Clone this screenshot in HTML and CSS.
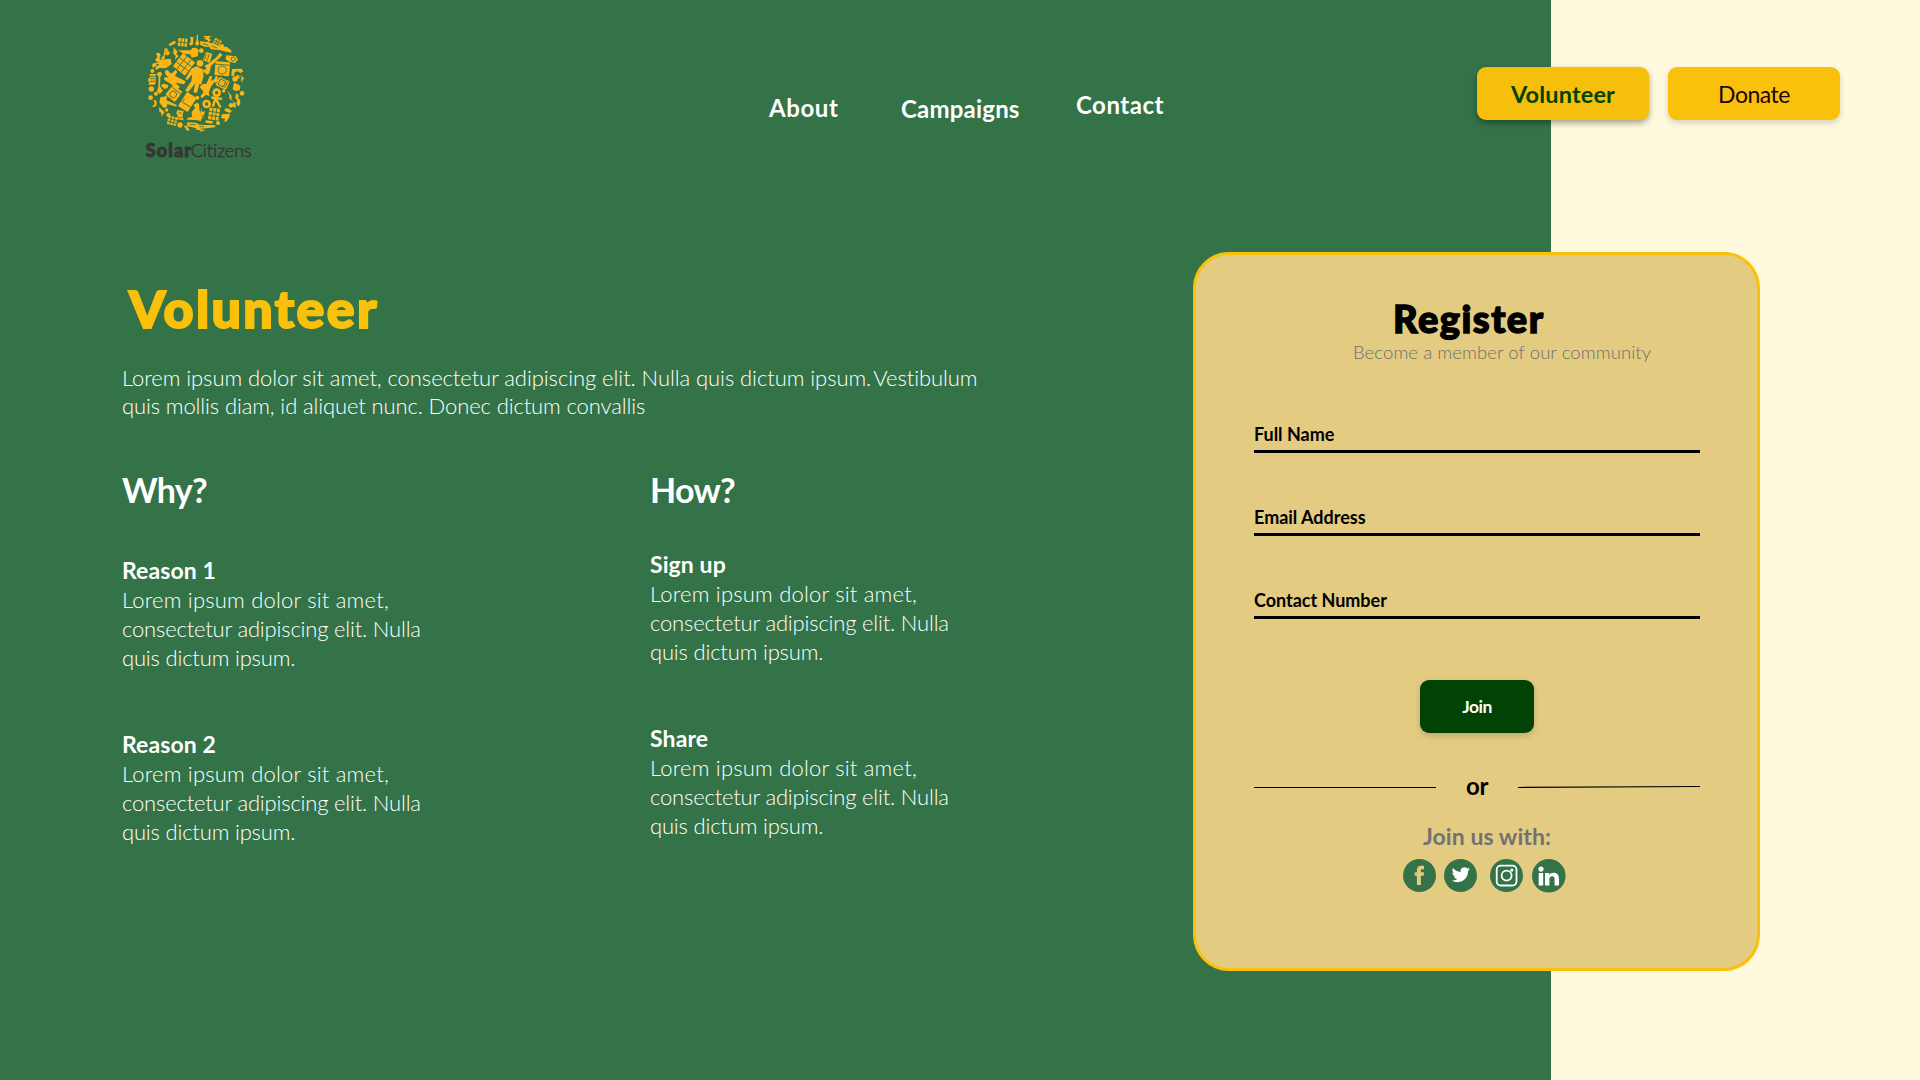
FILE: index.html
```html
<!DOCTYPE html>
<html lang="en">
<head>
<meta charset="utf-8">
<title>Solar Citizens – Volunteer</title>
<link rel="stylesheet" href="styles.css">
</head>
<body>
<header class="header">
  <a class="logo">
    <svg class="logo-svg" viewBox="0 0 420 450" role="img" aria-label="Solar Citizens">
      <g class="logo-art">
        <!-- solar panels -->
        <g transform="translate(162 133) rotate(38)">
          <rect x="-23" y="-25" width="46" height="50" rx="2"/>
          <path class="cut" d="M-8-25V25M8-25V25M-23-8H23M-23 8H23"/>
        </g>
        <g transform="translate(252 282) rotate(8)">
          <rect x="-16" y="-18" width="32" height="36" rx="2"/>
          <path class="cut" d="M-5-18V18M6-18V18M-16-6H16M-16 6H16"/>
        </g>
        <g transform="translate(127 302) rotate(14)">
          <rect x="-14" y="-13" width="28" height="26" rx="2"/>
          <path class="cut" d="M-5-13V13M5-13V13M-14-4H14M-14 5H14"/>
        </g>
        <g transform="translate(158 67) rotate(6)">
          <rect x="-14" y="-12" width="28" height="24" rx="2"/>
          <path class="cut" d="M-5-12V12M5-12V12M-14 0H14"/>
        </g>
        <g transform="translate(261 68) rotate(28)">
          <rect x="-11" y="-11" width="22" height="22" rx="2"/>
          <path class="cut" d="M-3-11V11M4-11V11M-11-3H11M-11 4H11"/>
        </g>
        <!-- standing figure -->
        <circle cx="210" cy="130" r="10"/>
        <path d="M199 139L184 146L166 176L171 181L187 163L184 184L165 212L175 216L196 190L190 217L201 219L210 184L216 165L207 190L213 195L221 168L218 148Z"/>
        <!-- second figure -->
        <path d="M105 152L113 150L123 161L137 150L142 155L135 168L167 184L162 193L136 188L150 201L143 207L124 193L102 179L104 171L116 173L106 163Z"/>
        <path d="M218 192L229 191L240 167L246 169L243 184L254 176L257 181L242 202L236 219L239 229L228 224L216 235L211 229L221 216L209 201Z"/>
        <!-- washing machines -->
        <g transform="translate(277 146) rotate(5)">
          <rect x="-22" y="-21" width="44" height="42" rx="3"/>
          <path class="cut" d="M-22-12H22"/><circle class="cut" cy="4" r="12"/>
        </g>
        <g transform="translate(132 220) rotate(38)">
          <rect x="-18" y="-19" width="36" height="38" rx="3"/>
          <path class="cut" d="M-18-11H18"/><circle class="cut" cy="4" r="10"/>
        </g>
        <g transform="translate(278 190) rotate(25)">
          <rect x="-17" y="-14" width="34" height="28" rx="3"/>
          <rect class="cut" x="-11" y="-9" width="17" height="18"/><path class="cut" d="M11-10V10"/>
        </g>
        <!-- fridge -->
        <g transform="translate(172 246) rotate(33)">
          <rect x="-17" y="-25" width="34" height="50" rx="3"/>
          <path class="cut" d="M-17 8H17M-12-3V4"/>
        </g>
        <!-- dog -->
        <path d="M201 248L207 251L208 269L216 290L213 303L197 300L170 299L173 293L186 291L185 276L196 263L190 255Z"/>
        <!-- bicycle and wheels -->
        <path fill-rule="evenodd" d="M260 205a13 13 0 1 1 0 26a13 13 0 1 1 0-26M260 213a5 5 0 1 0 0 10a5 5 0 1 0 0-10M230 239a13 13 0 1 1 0 26a13 13 0 1 1 0-26M230 247a5 5 0 1 0 0 10a5 5 0 1 0 0-10"/>
        <path d="M244 229L276 233L277 239L263 239L275 262L268 263L257 244L252 261L245 259L252 238L244 236Z"/>
        <!-- watering cans and tools -->
        <path d="M145 91L183 91L186 84L199 83L206 91L203 109L185 113L180 103L160 101Z"/>
        <path d="M94 119L122 116L125 132L107 145L89 144L78 150L76 143L88 132L79 131Z"/>
        <path d="M210 64L236 67L271 79L288 80L304 91L304 98L283 94L267 90L243 88L238 80L225 80L211 75Z"/>
        <path class="cut" d="M218 71L235 75M244 78L262 84"/>
        <path d="M91 232L112 228L109 240L140 255L139 260L112 252L110 262L100 263L88 247Z"/>
        <path d="M172 307L199 308L207 314L256 316L256 322L207 327L188 322L171 319Z"/>
        <path class="cut" d="M178 314H197M208 320H222"/>
        <path d="M86 157L93 155L96 163L91 172L90 199L99 212L89 222L81 215L85 200L86 170L79 162Z"/>
        <path d="M59 162H77V190L73 194H56L58 185H54L56 173H60Z"/>
        <path class="cut" d="M60 169H77M60 176H76M59 184H76"/>
        <path d="M270 98L278 105L243 138L238 160L230 165L224 157L229 145L223 137L234 132L259 112Z"/>
        <path d="M228 96L247 101L239 128L219 121Z"/>
        <path class="cut" d="M230 101L224 119M238 102L231 123"/>
        <path d="M289 106L318 109L324 119L315 129L298 125L286 117Z"/>
        <circle class="cut" cx="310" cy="117" r="6"/>
        <path d="M306 147L335 146L340 155L330 159L325 154L314 156L312 169L304 167Z"/>
        <path d="M312 188L326 194L331 199L329 211L315 213L308 207Z"/>
        <path d="M276 283L300 281L297 293L289 305L283 305L285 296L273 294Z"/>
        <path d="M142 270L161 273L157 289L161 301L136 297L144 289L139 280Z"/>
        <path class="cut" d="M146 278L155 280M143 293H155"/>
        <!-- bolts -->
        <path d="M131 82L143 95L139 101L146 109L135 119L137 107L130 102Z"/>
        <path d="M218 47L245 49L236 55L244 60L232 68L234 61L222 56L228 53Z"/>
        <path d="M87 261L96 269L104 276L95 290L94 279L88 275Z"/>
        <path d="M213 265L216 276L226 273L216 299L218 285L211 286Z"/>
        <path d="M292 211L305 228L304 236L310 245L297 235L299 229Z"/>
        <path d="M331 164L344 177L337 179L338 190L332 179L335 175Z"/>
        <path d="M197 321L217 329L229 329L209 336L213 331L199 329Z"/>
        <path d="M162 319L168 316L179 330L172 333Z"/>
        <!-- bulbs, notes, small pieces -->
        <path d="M104 84L114 87L112 94L105 92L104 116L95 120L94 111L100 109Z"/>
        <path d="M181 50L190 51L189 73L181 77L177 70L182 66Z"/>
        <path d="M200 44L204 44L204 60L208 71L201 78L195 71L200 60Z"/>
        <path d="M116 73L132 62L139 67L132 73L119 78Z"/>
        <path d="M78 99H88L92 106L88 115L94 121L83 127L75 120L82 111Z"/>
        <path d="M67 131L83 127L78 139L67 143Z"/>
        <path d="M71 240L78 241L81 252L75 261L66 260L74 252Z"/>
        <path d="M92 196L101 191L115 195L113 204L103 207Z"/>
        <path d="M318 220L326 225L325 235L331 241L328 258L321 257L323 243L316 233Z"/>
        <path d="M310 245L317 250L317 263L309 261Z"/>
        <path d="M286 265L297 266L306 274L299 279L283 272Z"/>
        <path d="M227 301L249 304L247 311L226 308Z"/>
        <path d="M255 170L262 167L264 183L255 190Z"/>
        <circle cx="64" cy="207" r="8"/><circle cx="78" cy="221" r="6"/><circle cx="62" cy="233" r="7"/>
        <circle cx="67" cy="153" r="6"/><circle cx="112" cy="99" r="7"/><circle cx="214" cy="92" r="7"/>
        <circle cx="276" cy="78" r="6"/><circle cx="290" cy="86" r="5"/><circle cx="315" cy="177" r="8"/>
        <circle cx="323" cy="171" r="6"/><circle cx="336" cy="220" r="7"/><circle cx="303" cy="256" r="7"/>
        <circle cx="150" cy="315" r="8"/><circle cx="264" cy="309" r="6"/><circle cx="115" cy="285" r="6"/>
        <circle cx="110" cy="270" r="5"/><circle cx="224" cy="153" r="5"/><circle cx="202" cy="233" r="6"/>
        <circle cx="281" cy="213" r="5"/><circle cx="200" cy="204" r="4"/><circle cx="325" cy="248" r="6"/>
      </g>
      <text class="logo-name" x="47" y="412"><tspan class="logo-bold" textLength="136">Solar</tspan><tspan x="182" textLength="183">Citizens</tspan></text>
    </svg>
  </a>
  <nav class="nav">
    <a class="nav-about">About</a>
    <a class="nav-campaigns">Campaigns</a>
    <a class="nav-contact">Contact</a>
  </nav>
  <div class="actions">
    <a class="btn btn-volunteer">Volunteer</a>
    <a class="btn btn-donate">Donate</a>
  </div>
</header>

<main class="main">
  <section class="content">
    <h1 class="title">Volunteer</h1>
    <p class="intro">Lorem ipsum dolor sit amet, consectetur adipiscing elit. Nulla quis dictum ipsum.<span class="tight"> </span>Vestibulum<br><span class="snug">quis mollis diam, id aliquet nunc. Donec dictum convallis</span></p>
    <div class="columns">
      <div class="column">
        <h2 class="heading">Why?</h2>
        <article class="item">
          <h3 class="item-title">Reason 1</h3>
          <p><span class="wide">Lorem ipsum dolor sit amet,</span><br>consectetur adipiscing elit. Nulla<br>quis dictum ipsum.</p>
        </article>
        <article class="item">
          <h3 class="item-title">Reason 2</h3>
          <p><span class="wide">Lorem ipsum dolor sit amet,</span><br>consectetur adipiscing elit. Nulla<br>quis dictum ipsum.</p>
        </article>
      </div>
      <div class="column column-how">
        <h2 class="heading">How?</h2>
        <article class="item">
          <h3 class="item-title">Sign up</h3>
          <p><span class="wide">Lorem ipsum dolor sit amet,</span><br>consectetur adipiscing elit. Nulla<br>quis dictum ipsum.</p>
        </article>
        <article class="item">
          <h3 class="item-title">Share</h3>
          <p><span class="wide">Lorem ipsum dolor sit amet,</span><br>consectetur adipiscing elit. Nulla<br>quis dictum ipsum.</p>
        </article>
      </div>
    </div>
  </section>

  <form class="card">
    <h2 class="card-title">Register</h2>
    <p class="card-sub">Become a member of our community</p>
    <div class="fields">
      <label class="field">Full Name</label>
      <label class="field">Email Address</label>
      <label class="field">Contact Number</label>
    </div>
    <a class="join">Join</a>
    <div class="divider">
      <svg viewBox="0 0 182 4"><path d="M0 2.5H182"/></svg>
      <span>or</span>
      <svg viewBox="0 0 182 4"><path d="M0 2.5L182 1.5"/></svg>
    </div>
    <p class="social-label">Join us with:</p>
    <div class="social">
      <svg class="facebook" viewBox="0 0 33 33"><circle cx="16.5" cy="16.5" r="16.5"/><path class="sand" d="M13.9 26V16.7H11.7V13.2H13.9V11.2C13.9 8 15.5 6.7 18.3 6.7H21V10.2H19.3C18.2 10.2 17.9 10.6 17.9 11.6V13.2H21L20.6 16.7H17.9V26Z"/></svg>
      <svg class="twitter" viewBox="0 0 33 33"><circle cx="16.5" cy="16.5" r="16.5"/><path class="white" transform="translate(7.7 6.6) scale(.76)" d="M23.95 4.57a10 10 0 0 1-2.82.77 4.96 4.96 0 0 0 2.16-2.72c-.95.55-2 .95-3.13 1.18a4.92 4.92 0 0 0-8.38 4.48C7.69 8.1 4.07 6.13 1.64 3.16a4.82 4.82 0 0 0-.67 2.48c0 1.71.87 3.21 2.19 4.1a4.9 4.9 0 0 1-2.23-.62v.06a4.92 4.92 0 0 0 3.95 4.83 5 5 0 0 1-2.21.08 4.94 4.94 0 0 0 4.6 3.42A9.87 9.87 0 0 1 0 19.54a14 14 0 0 0 7.55 2.21c9.05 0 14-7.5 14-13.98 0-.21 0-.42-.02-.63a9.94 9.94 0 0 0 2.46-2.55z"/></svg>
      <svg class="instagram" viewBox="0 0 33 33"><circle cx="16.5" cy="16.5" r="16.5"/><rect class="outline" x="6.7" y="6.7" width="19.8" height="19.8" rx="4"/><circle class="outline" cx="16.6" cy="16.6" r="5"/><circle class="white" cx="21.9" cy="11.1" r="1.6"/></svg>
      <svg class="linkedin" viewBox="0 0 33.6 33.6"><circle cx="16.8" cy="16.8" r="16.8"/><path class="white" d="M6.7 14H11.2V26.6H6.7ZM13 14H17.2V15.9C18 14.5 19.5 13.7 21.5 13.7C25.5 13.7 27 16.1 27 20V26.6H22.6V20.6C22.6 18.6 22.2 17.3 20.3 17.3C18.2 17.3 17.4 18.8 17.4 20.7V26.6H13Z"/><circle class="white" cx="9" cy="10.1" r="2.6"/></svg>
    </div>
  </form>
</main>
</body>
</html>
```

FILE: styles.css
```css
* { box-sizing: border-box; margin: 0; padding: 0; }

body {
  width: 1920px;
  height: 1080px;
  overflow: hidden;
  background: linear-gradient(to right, #347348 1551px, #fff9de 1551px);
  color: #fff;
  font-family: Lato, "Open Sans", sans-serif;
}

/* header */
.header { display: flex; align-items: flex-start; height: 180px; padding: 0 80px 0 130px; }
.logo { width: 140px; height: 150px; margin-top: 20px; }
.logo-svg { display: block; width: 140px; height: 150px; }
.logo-art { fill: #fdb515; }
.cut { fill: none; stroke: #347348; stroke-width: 2.5; }
.logo-name { fill: #383536; font-size: 54px; font-weight: 300; stroke: #383536; stroke-width: 1.6; }
.logo-bold { font-weight: 900; stroke-width: 3; }

.nav { display: flex; align-items: flex-start; margin-left: 499px; font-size: 24px; line-height: 28px; font-weight: 700; white-space: nowrap; }
.nav-about { width: 132px; margin-top: 94px; letter-spacing: .6px; }
.nav-campaigns { width: 175px; margin-top: 95px; letter-spacing: .2px; }
.nav-contact { width: 87px; margin-top: 91px; letter-spacing: .5px; }

.actions { display: flex; gap: 19px; margin: 67px 0 0 auto; }
.btn { width: 172px; height: 53px; border-radius: 9px; background: #f9c10b; font-size: 23.5px; line-height: 54px; text-align: center; }
.btn-volunteer { background: #f6bf0b; color: #004304; font-weight: 700; letter-spacing: .15px; box-shadow: 0 3px 6px rgba(0, 0, 0, .36); }
.btn-donate { color: #1e0600; font-size: 23px; letter-spacing: -.5px; box-shadow: 0 3px 6px rgba(0, 0, 0, .16); }

/* content */
.main { display: flex; align-items: flex-start; padding-left: 122px; }
.content { width: 1071px; padding-top: 97.5px; }
.title { margin-left: 7px; color: #f9c10b; font-size: 52px; line-height: 60px; font-weight: 900; letter-spacing: 2.35px; -webkit-text-stroke: 2px #f9c10b; }
.intro { margin-top: 26px; font-size: 22px; line-height: 28px; font-weight: 300; letter-spacing: -.07px; white-space: nowrap; }
.tight { letter-spacing: -4px; }
.snug { letter-spacing: -.12px; }
.columns { display: flex; margin-top: 50.5px; }
.column { width: 528px; }
.heading { font-size: 34px; line-height: 40px; font-weight: 700; letter-spacing: -.7px; }
.item { margin-top: 45.5px; font-size: 22px; line-height: 29px; font-weight: 300; letter-spacing: -.18px; }
.item + .item { margin-top: 58px; }
.column-how .item:first-of-type { margin-top: 40px; }
.item-title { font-size: 23px; font-weight: 700; letter-spacing: .1px; }
.wide { letter-spacing: .2px; }

/* register card */
.card {
  width: 567px;
  height: 719px;
  margin-top: 72px;
  padding: 41px 57px 0 58px;
  border: 3px solid #f9c10b;
  border-radius: 36px;
  background: #e3cb81;
  color: #000;
}
.card-title { margin-left: 139px; font-size: 38px; line-height: 44px; font-weight: 900; letter-spacing: 1.5px; -webkit-text-stroke: 1.4px #000; }
.card-sub { margin-left: 99px; color: #6f6f6f; font-size: 18.5px; line-height: 24px; font-weight: 300; letter-spacing: .08px; white-space: nowrap; }
.fields { display: grid; gap: 53px; margin-top: 59px; }
.field { height: 30px; border-bottom: 3px solid #000; font-size: 18px; line-height: 23px; font-weight: 700; letter-spacing: -.02px; }
.join {
  display: block;
  width: 114px;
  height: 53px;
  margin: 61px 0 0 166px;
  border-radius: 9px;
  background: #004304;
  box-shadow: 0 3px 6px rgba(0, 0, 0, .16);
  color: #fff;
  font-size: 17.5px;
  line-height: 53px;
  font-weight: 700;
  letter-spacing: -.5px;
  text-align: center;
}
.divider { display: flex; justify-content: space-between; align-items: center; height: 28px; margin-top: 39px; font-size: 24px; line-height: 28px; font-weight: 700; letter-spacing: -.3px; }
.divider svg { width: 182px; height: 4px; margin-top: 2px; fill: none; stroke: #000; stroke-width: 1.2; }
.social-label { margin: 22px 0 0 169px; color: #727272; font-size: 23px; line-height: 28px; font-weight: 700; letter-spacing: .07px; }
.social { display: flex; margin: 9px 0 0 149px; }
.social svg { width: 33px; height: 33px; fill: #347348; }
.social .twitter { margin-left: 8px; }
.social .instagram { margin-left: 13px; }
.social .linkedin { width: 33.6px; height: 33.6px; margin-left: 9px; }
.social .sand { fill: #e3cb81; }
.social .white { fill: #fff; }
.social .outline { fill: none; stroke: #fff; stroke-width: 1.8; }
```
